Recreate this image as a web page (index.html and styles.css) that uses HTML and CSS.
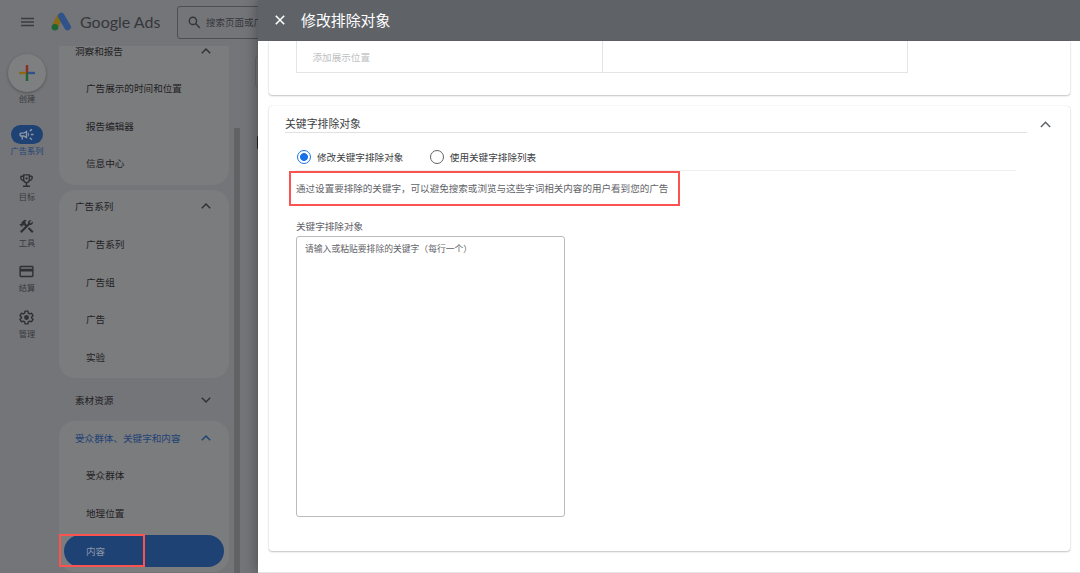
FILE: index.html
```
<!DOCTYPE html>
<html lang="zh-CN">
<head>
  <meta charset="UTF-8">
  <meta name="viewport" content="width=device-width, initial-scale=1.0">
  <title>Google Ads</title>
  <link rel="stylesheet" href="styles.css">
</head>
<body>
  <div class="app">
    <div class="page">
      <header class="topbar">
        <svg class="menu-icon" viewBox="0 0 13 10"><path d="M0 1.500h13M0 5h13M0 8.500h13"/></svg>
        <svg class="logo" viewBox="0 0 22 20">
          <path d="M9.500 4L4 14.500" stroke="#8a6a12" stroke-width="6.400"/>
          <path d="M10.200 4L16.600 15" stroke="#2f5388" stroke-width="6.600" stroke-linecap="round"/>
          <circle cx="3.900" cy="15.200" r="3.300" fill="#1e6434"/>
        </svg>
        <span class="brand">Google Ads</span>
        <div class="search">
          <svg viewBox="0 0 14 14"><circle cx="5.300" cy="5.300" r="3.900"/><path d="M8.200 8.200L12.800 12.800"/></svg>
          <span>搜索页面或广告系列</span>
        </div>
      </header>

      <div class="main">
        <nav class="rail">
          <div class="create">
            <svg viewBox="0 0 18 18">
              <path d="M9 1v8" stroke="#8a2f28"/>
              <path d="M9 9v8" stroke="#1e6434"/>
              <path d="M1 9h7" stroke="#8a6a12"/>
              <path d="M10 9h7" stroke="#2f5388"/>
            </svg>
          </div>
          <span class="rail-label">创建</span>
          <div class="rail-items">
            <div class="rail-item active">
              <div class="rail-icon">
                <svg viewBox="0 0 24 24"><path d="M18 11v2h4v-2h-4zM16 17.600c1 .7 2.200 1.600 3.200 2.400.4-.5.800-1.100 1.200-1.600-1-.7-2.200-1.600-3.200-2.400-.4.5-.8 1.100-1.200 1.600zM20.400 5.600c-.4-.5-.8-1.100-1.200-1.600-1 .7-2.200 1.600-3.200 2.400.4.5.8 1.100 1.200 1.600 1-.8 2.200-1.600 3.200-2.400zM4 9c-1.100 0-2 .9-2 2v2c0 1.100.9 2 2 2h1v4h2v-4h1l5 3V6L8 9H4zm5.030 1.710L11 9.530v4.940l-1.970-1.180-.48-.29H4v-2h4.550l.48-.29zM15.500 12c0-1.330-.58-2.530-1.500-3.350v6.690c.92-.81 1.500-2.010 1.500-3.340z"/></svg>
              </div>
              <span class="rail-label">广告系列</span>
            </div>
            <div class="rail-item">
              <div class="rail-icon">
                <svg viewBox="0 0 24 24"><path d="M19 5h-2V3H7v2H5c-1.100 0-2 .9-2 2v1c0 2.550 1.920 4.630 4.390 4.940.63 1.500 1.980 2.630 3.610 2.960V19H7v2h10v-2h-4v-3.100c1.630-.33 2.980-1.460 3.610-2.960C19.080 12.630 21 10.550 21 8V7c0-1.100-.9-2-2-2zM5 8V7h2v3.820C5.840 10.400 5 9.300 5 8zm7 6c-1.650 0-3-1.350-3-3V5h6v6c0 1.650-1.350 3-3 3zm7-6c0 1.300-.84 2.400-2 2.820V7h2v1z"/><circle cx="12" cy="9" r="1.600"/></svg>
              </div>
              <span class="rail-label">目标</span>
            </div>
            <div class="rail-item">
              <div class="rail-icon">
                <svg viewBox="0 0 24 24"><path d="M13.780 15.170l2.120-2.120 6 6-2.120 2.120zM17.500 10c1.930 0 3.500-1.570 3.500-3.500 0-.58-.16-1.120-.41-1.600l-2.700 2.700-1.490-1.490 2.700-2.700c-.48-.25-1.020-.41-1.600-.41C15.570 3 14 4.570 14 6.500c0 .41.08.8.21 1.160l-1.850 1.850-1.780-1.780.71-.71-1.410-1.410L12 3.490c-1.170-1.170-3.070-1.170-4.240 0L4.220 7.030l1.410 1.410H2.810l-.71.71 3.540 3.540.71-.71V9.150l1.410 1.410.71-.71 1.780 1.780-7.410 7.410 2.120 2.120L16.340 9.790c.36.13.75.21 1.160.21z"/></svg>
              </div>
              <span class="rail-label">工具</span>
            </div>
            <div class="rail-item">
              <div class="rail-icon">
                <svg viewBox="0 0 24 24"><path d="M20 4H4c-1.110 0-1.990.89-1.990 2L2 18c0 1.110.89 2 2 2h16c1.110 0 2-.89 2-2V6c0-1.110-.89-2-2-2zm0 14H4v-6h16v6zm0-10H4V6h16v2z"/></svg>
              </div>
              <span class="rail-label">结算</span>
            </div>
            <div class="rail-item">
              <div class="rail-icon">
                <svg viewBox="0 0 24 24"><path class="gear" d="M10 3h4l.6 2.700 2 1.150 2.600-.85 2 3.450-2 1.850v1.400l2 1.850-2 3.450-2.600-.85-2 1.150L14 21h-4l-.6-2.700-2-1.150-2.600.85-2-3.450 2-1.850v-1.400l-2-1.850 2-3.450 2.600.85 2-1.150z"/><circle cx="12" cy="12" r="3.400"/></svg>
              </div>
              <span class="rail-label">管理</span>
            </div>
          </div>
        </nav>

        <nav class="sidebar">
          <section class="group first">
            <div class="group-title">洞察和报告<svg class="chevron" viewBox="0 0 10 6"><path d="M0.800 5.200L5 1l4.200 4.200"/></svg></div>
            <div class="entry">广告展示的时间和位置</div>
            <div class="entry">报告编辑器</div>
            <div class="entry">信息中心</div>
          </section>
          <section class="group">
            <div class="group-title">广告系列<svg class="chevron" viewBox="0 0 10 6"><path d="M0.800 5.200L5 1l4.200 4.200"/></svg></div>
            <div class="entry">广告系列</div>
            <div class="entry">广告组</div>
            <div class="entry">广告</div>
            <div class="entry">实验</div>
          </section>
          <section class="group closed">
            <div class="group-title">素材资源<svg class="chevron" viewBox="0 0 10 6"><path d="M0.800 0.800L5 5l4.200-4.200"/></svg></div>
          </section>
          <section class="group">
            <div class="group-title current">受众群体、关键字和内容<svg class="chevron" viewBox="0 0 10 6"><path d="M0.800 5.200L5 1l4.200 4.200"/></svg></div>
            <div class="entry">受众群体</div>
            <div class="entry">地理位置</div>
            <div class="entry selected"><span>内容</span><i class="mark"></i></div>
          </section>
        </nav>

        <div class="scrollbar"></div>
        <div class="behind"><div class="behind-card"></div><div class="behind-tab"></div></div>
      </div>
    </div>

    <div class="dialog">
      <header class="dialog-header">
        <svg viewBox="0 0 10 10"><path d="M0.800 0.800l8.400 8.400M9.200 0.800L0.800 9.200"/></svg>
        <h1>修改排除对象</h1>
      </header>
      <div class="dialog-body">
        <section class="card placements">
          <div class="table">
            <div class="cell">添加展示位置</div>
            <div class="cell"></div>
          </div>
        </section>

        <section class="card keywords">
          <div class="card-head">
            <h2>关键字排除对象</h2>
            <svg class="chevron" viewBox="0 0 10 6"><path d="M0.800 5.200L5 1l4.200 4.200"/></svg>
          </div>
          <div class="card-content">
            <div class="radios">
              <div class="option"><span class="radio checked"></span>修改关键字排除对象</div>
              <div class="option"><span class="radio"></span>使用关键字排除列表</div>
            </div>
            <p class="hint">通过设置要排除的关键字，可以避免搜索或浏览与这些字词相关内容的用户看到您的广告</p>
            <div class="label">关键字排除对象</div>
            <div class="textarea">请输入或粘贴要排除的关键字（每行一个）</div>
          </div>
        </section>
      </div>
    </div>
  </div>
</body>
</html>
```
FILE: styles.css
```
* {
  margin: 0;
  padding: 0;
  box-sizing: border-box;
}

body {
  font-family: Roboto, "Noto Sans CJK SC", sans-serif;
  font-size: 9.6px;
  color: #3c4043;
  overflow: hidden;
}

svg {
  display: block;
  flex: none;
  fill: none;
}

.app {
  display: flex;
  height: 573px;
}

/* dimmed page */
.page {
  display: flex;
  flex-direction: column;
  width: 258px;
  flex: none;
  overflow: hidden;
  background: #747579;
  color: #1f2123;
}

.topbar {
  display: flex;
  align-items: center;
  height: 46px;
  flex: none;
  padding: 0 0 2px 21px;
  white-space: nowrap;
}

.menu-icon {
  width: 13px;
  height: 10px;
  stroke: #3a3c3f;
  stroke-width: 1.3;
}

.logo {
  width: 22px;
  height: 20px;
  margin-left: 17px;
}

.brand {
  width: 97px;
  flex: none;
  margin-left: 7px;
  font-family: Lato, sans-serif;
  font-size: 16px;
  line-height: 20px;
  color: #35373a;
}

.search {
  display: flex;
  align-items: center;
  gap: 5px;
  width: 300px;
  height: 33px;
  flex: none;
  padding-left: 10px;
  border: 1px solid #4c4e51;
  border-radius: 3px;
  color: #35373a;
  font-size: 9.5px;
}

.search svg {
  width: 13px;
  height: 13px;
  stroke: #333538;
  stroke-width: 1.5;
}

.main {
  display: flex;
  flex: 1;
  min-height: 0;
}

.rail {
  display: flex;
  flex-direction: column;
  align-items: center;
  width: 59px;
  flex: none;
  padding: 8px 5px 0 0;
}

.create {
  display: flex;
  align-items: center;
  justify-content: center;
  width: 38px;
  height: 38px;
  margin-bottom: 1px;
  border-radius: 50%;
  background: #7e7f80;
  box-shadow: 0 1px 3px rgba(0, 0, 0, 0.3);
}

.create svg {
  width: 18px;
  height: 18px;
  stroke-width: 2.4;
}

.rail-label {
  font-size: 8.2px;
  line-height: 13px;
  color: #37393c;
  white-space: nowrap;
}

.rail-items {
  display: flex;
  flex-direction: column;
  gap: 12.8px;
  margin-top: 19px;
}

.rail-item {
  display: flex;
  flex-direction: column;
  align-items: center;
  height: 33px;
}

.rail-icon {
  display: flex;
  align-items: center;
  justify-content: center;
  width: 32px;
  height: 19px;
  margin-bottom: 1px;
  border-radius: 10px;
}

.rail-icon svg {
  width: 17px;
  height: 17px;
  fill: #2e3033;
}

.rail-icon .gear {
  fill: none;
  stroke: #2e3033;
  stroke-width: 2;
  stroke-linejoin: round;
}

.active .rail-icon {
  background: #1f4275;
}

.active .rail-icon svg {
  fill: #8c96a5;
}

.active .rail-label {
  color: #1f4275;
}

.sidebar {
  width: 170px;
  flex: none;
  overflow: hidden;
}

.group {
  margin-bottom: 5.3px;
  padding-bottom: 2.6px;
  border-radius: 16px;
  background: #7b7c7e;
}

.group.first {
  margin-top: -11.800px;
}

.group.closed {
  margin-bottom: 0;
  background: none;
}

.group-title {
  display: flex;
  align-items: center;
  justify-content: space-between;
  height: 32.6px;
  margin-bottom: 2.5px;
  padding: 0 18px 0 16px;
}

.chevron {
  width: 10px;
  height: 6px;
  stroke: #2e3033;
  stroke-width: 1.4;
}

.current {
  color: #1f4275;
}

.current .chevron {
  stroke: #1f4275;
}

.entry {
  display: flex;
  align-items: center;
  height: 37.65px;
  padding-left: 27px;
}

.entry.selected {
  position: relative;
  height: 32px;
  margin: 3px 5px;
  padding-left: 22px;
  border-radius: 16px;
  background: #1f4275;
  color: #8c96a5;
}

.mark {
  position: absolute;
  left: -5px;
  top: -1px;
  width: 86px;
  height: 33px;
  border: 2px solid #fb5350;
}

.scrollbar {
  width: 6px;
  flex: none;
  margin: 82px 0 0 5px;
  background: #616263;
}

.behind {
  flex: 1;
  padding: 9px 0 0 15px;
}

.behind-card {
  width: 20px;
  height: 33px;
  border: 1px solid #67686b;
  border-radius: 4px;
}

.behind-tab {
  width: 10px;
  height: 13px;
  margin: 48px 0 0 2px;
  border-radius: 1px;
  background: #25222a;
}

/* exclusions dialog */
.dialog {
  position: relative;
  display: flex;
  flex-direction: column;
  flex: 1;
  background: #fff;
  border-bottom: 1px solid #e4e4e6;
  box-shadow: 0 0 14px rgba(0, 0, 0, 0.4);
}

.dialog-header {
  display: flex;
  align-items: center;
  gap: 16px;
  height: 41px;
  flex: none;
  padding: 0 0 3px 17px;
  background: #5f6368;
  color: #fff;
}

.dialog-header svg {
  width: 10px;
  height: 10px;
  margin-top: 1px;
  stroke: #fff;
  stroke-width: 1.6;
}

.dialog-header h1 {
  font-size: 14.9px;
  font-weight: 400;
}

.dialog-body {
  padding: 0 10px 0 11px;
}

.card {
  border-radius: 3px;
  box-shadow: 0 1px 2px rgba(0, 0, 0, 0.22), 0 0 1px rgba(0, 0, 0, 0.22);
}

.placements {
  height: 54px;
  padding-left: 27px;
  border-radius: 0 0 3px 3px;
}

.table {
  display: flex;
  width: 612px;
  height: 32px;
  border: 1px solid #e3e4e6;
  border-top: none;
}

.cell {
  display: flex;
  align-items: center;
  width: 305px;
  padding: 1px 0 0 15.5px;
  color: #bdbfc1;
}

.cell + .cell {
  border-left: 1px solid #e3e4e6;
}

.keywords {
  height: 445px;
  margin-top: 11px;
  padding: 9px 19px 0 16px;
}

.card-head {
  display: flex;
  align-items: center;
  justify-content: space-between;
}

.card-head h2 {
  width: 742px;
  height: 18px;
  border-bottom: 1px solid #e0e1e3;
  font-size: 10.85px;
  font-weight: 400;
  line-height: 20px;
}

.card-head .chevron {
  width: 11px;
  height: 7px;
  stroke: #5f6368;
}

.card-content {
  padding-left: 11px;
}

.radios {
  display: flex;
  align-items: center;
  gap: 26.5px;
  width: 720px;
  height: 38px;
  padding: 10px 0 0 1px;
  border-bottom: 1px solid #eff0f1;
}

.option {
  display: flex;
  align-items: center;
  gap: 6px;
}

.radio {
  width: 14px;
  height: 14px;
  border: 1.5px solid #5f6368;
  border-radius: 50%;
}

.radio.checked {
  border-color: #1a73e8;
  background: radial-gradient(circle, #1a73e8 3.6px, transparent 4.2px);
}

.hint {
  width: 391px;
  height: 35px;
  margin-left: -7px;
  padding-left: 5px;
  border: 2px solid #fb5350;
  font-size: 9.56px;
  line-height: 32px;
  color: #5f6368;
  white-space: nowrap;
}

.label {
  margin-top: 13px;
  font-size: 9.6px;
  line-height: 16px;
  color: #5f6368;
}

.textarea {
  width: 269px;
  height: 281px;
  margin-top: 1px;
  padding: 5px 8px;
  border: 1px solid #b9bbbe;
  border-radius: 3px;
  font-size: 8.8px;
  line-height: 15px;
  color: #5f6368;
}
```
